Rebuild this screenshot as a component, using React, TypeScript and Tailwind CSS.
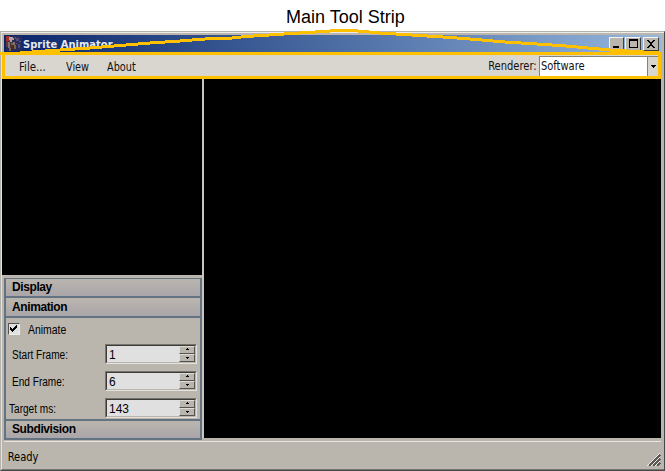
import React from 'react';

const bevel = 'border border-t-[#f4f3f0] border-l-[#f4f3f0] border-r-[#404040] border-b-[#404040] bg-[#bab6ae]';

function SpinButton({ up }: { up?: boolean }) {
  return (
    <div className="flex h-2 w-4 items-center justify-center border border-t-[#dedcd8] border-l-[#dedcd8] border-r-[#55534f] border-b-[#55534f] bg-[#bab6ae]">
      <svg width="5" height="3" shapeRendering="crispEdges">
        <path d={up ? 'M2 0h1v1h1v1H1V1h1z' : 'M1 1h3v1H3v1H2V2H1z'} fill="#000" />
      </svg>
    </div>
  );
}

function Field({ label, value, indent }: { label: string; value: string; indent: string }) {
  return (
    <div className="flex h-[27px] items-center">
      <div className={`w-[99px] shrink-0 ${indent}`}>
        <span className="block origin-left scale-x-[0.84] whitespace-nowrap pt-0.5 text-[12px]">{label}</span>
      </div>
      <div className="flex h-5 w-[92px] border border-t-[#77746e] border-l-[#77746e] border-r-[#e4e2de] border-b-[#e4e2de]">
        <div className="flex w-full justify-between border border-t-[#3c3b38] border-l-[#3c3b38] border-r-[#bab6ae] border-b-[#bab6ae] bg-[#e0e0e0]">
          <span className="pl-0.5 text-[12px] leading-[18px]">{value}</span>
          <div className="flex flex-col">
            <SpinButton up />
            <SpinButton />
          </div>
        </div>
      </div>
    </div>
  );
}

function Header({ children, size = 'h-[17px] leading-[17px]' }: { children: string; size?: string }) {
  return (
    <div className={`${size} bg-linear-to-b from-[#bab6ae] to-[#aaa5a9] pl-1.5 text-[12px] font-bold tracking-[-0.4px]`}>
      {children}
    </div>
  );
}

function AppIcon() {
  return (
    <svg width="16" height="15" shapeRendering="crispEdges" className="shrink-0">
      <path d="M0 0h16v15H0z" fill="#292b58" />
      <path d="M0 0h4v5H0z" fill="#a52e2b" />
      <path d="M0 5h3v6H0z" fill="#693538" />
      <path d="M3 1h4v3H3zM4 4h2v2H4z" fill="#a9a5a4" />
      <path d="M5 2h3v2H5z" fill="#b09a90" />
      <path d="M2 6h2v6H2zM7 6h2v3H7z" fill="#77757a" />
      <path d="M4 6h3v7H4z" fill="#4a3029" />
      <path d="M5 7h2v2H5zM8 9h2v4H8zM3 12h2v3H3z" fill="#806049" />
      <path d="M10 2h3v3h-3zM12 8h2v4h-2z" fill="#514b7d" />
      <path d="M9 1h1v2H9zM13 5h2v1h-2zM10 7h1v1h-1z" fill="#7a526b" />
    </svg>
  );
}

export default function App() {
  return (
    <div className="relative h-[471px] w-[665px] overflow-hidden bg-white font-['Liberation_Sans',sans-serif] text-[11px] text-black">
      <h1 className="h-[31px] pl-[286px] pt-[7px] text-[18px] leading-5">Main Tool Strip</h1>
      <div className="h-[440px] border border-t-[#b5b2ab] border-l-[#b5b2ab] border-r-[#45484c] border-b-[#45484c] bg-[#bab6ae]">
        <div className="h-full border-t border-l border-b border-t-[#eeece8] border-l-[#e5e3dd] border-b-[#77756f]">
          <div className="mr-[3px] flex h-full flex-col pt-0.5">
            <header className="ml-0.5 flex h-[17px] shrink-0 items-start justify-between bg-linear-to-r from-[#0b246a] to-[#96b7dc]">
              <div className="flex gap-px pl-0.5 pt-px">
                <AppIcon />
                <span className="font-['DejaVu_Sans_Condensed','DejaVu_Sans',sans-serif] text-[11px] leading-[17px] font-bold tracking-[0.05px] text-[#e6e9ef]">Sprite Animator</span>
              </div>
              <div className="mr-0.5 mt-0.5 flex h-[14px] w-[50px]">
                <div className={`h-[14px] w-[15px] ${bevel}`}>
                  <svg width="13" height="12"><path d="M3 8h6v2H3z" /></svg>
                </div>
                <div className={`ml-px h-[14px] w-4 ${bevel}`}>
                  <svg width="14" height="12" shapeRendering="crispEdges"><path d="M3 1h9v9H3zM4 3v6h7V3z" fillRule="evenodd" /></svg>
                </div>
                <div className={`ml-0.5 h-[14px] w-4 ${bevel}`}>
                  <svg width="14" height="12" shapeRendering="crispEdges"><path d="M3 2h2v1h1v1h2V3h1V2h2v1h-1v1H9v1H8v2h1v1h1v1h1v1H9V9H8V8H6v1H5v1H3V9h1V8h1V7h1V5H5V4H4V3H3z" /></svg>
                </div>
              </div>
            </header>
            <nav className="flex h-[27px] shrink-0 justify-between border-[3px] border-[#ffc000] bg-[#d9d6cf] font-['DejaVu_Sans_Condensed','DejaVu_Sans',sans-serif] text-[12px] text-[#111]">
              <div className="flex pl-[14px] leading-[24px]">
                <span className="w-[47px] origin-left scale-x-[0.95]">File...</span>
                <span className="w-[41px] origin-left scale-x-[0.9]">View</span>
                <span className="origin-left scale-x-[0.9]">About</span>
              </div>
              <div className="flex">
                <span className="mr-0.5 origin-right scale-x-[0.92] leading-[22px]">Renderer:</span>
                <div className="mt-px flex w-[119px] border-t border-l border-[#85827b] bg-white">
                  <span className="flex-1 origin-left scale-x-[0.92] pl-px leading-[19px]">Software</span>
                  <div className="flex w-[11px] items-center justify-center border-l border-[#85827b] bg-[#d9d6cf]">
                    <svg width="5" height="3" shapeRendering="crispEdges"><path d="M0 0h5v1H4v1H3v1H2V2H1V1H0z" /></svg>
                  </div>
                </div>
              </div>
            </nav>
            <main className="flex h-[361px] shrink-0">
              <aside className="w-[200px] shrink-0">
                <div className="h-[196px] bg-black" />
                <div className="ml-0.5 mt-[3px] h-[162px] w-[198px] border-2 border-t border-[#647382]">
                  <Header>Display</Header>
                  <div className="border-t-2 border-[#647382]"><Header size="h-[18px] leading-[19px]">Animation</Header></div>
                  <section className="h-[103px] border-t-2 border-[#647382]">
                    <label className="flex h-[22px] items-center gap-2 pl-[2px]">
                      <span className="flex h-3 w-3 items-center justify-center border border-t-[#55534f] border-l-[#55534f] border-r-[#eeece8] border-b-[#eeece8] bg-[#e0e0e0]">
                        <svg width="8" height="8" shapeRendering="crispEdges"><path d="M0 2h1v1h1v1h1V3h1V2h1V1h1V0h1v3H6v1H5v1H4v1H3v1H2V6H1V5H0z" /></svg>
                      </span>
                      <span className="origin-left scale-x-[0.87] pt-0.5 text-[12px]">Animate</span>
                    </label>
                    <Field label="Start Frame:" value="1" indent="pl-[6px]" />
                    <Field label="End Frame:" value="6" indent="pl-[6px]" />
                    <Field label="Target ms:" value="143" indent="pl-[3px]" />
                  </section>
                  <div className="border-t-2 border-[#647382]"><Header>Subdivision</Header></div>
                </div>
              </aside>
              <div className="h-[359px] w-0.5 bg-[#c9c6bf]" />
              <div className="h-[359px] flex-1 bg-black" />
            </main>
            <footer className="ml-0.5 mt-px flex flex-1 items-start justify-between border-t border-[#e6e4df]">
              <span className="origin-left scale-x-[0.92] pl-1 pt-[7px] font-['DejaVu_Sans_Condensed','DejaVu_Sans',sans-serif] text-[12px] leading-4">Ready</span>
              <svg width="14" height="14" className="mt-[11px]" shapeRendering="crispEdges">
                <path d="M0 13 13 0M4 13 13 4M8 13 13 8" stroke="#eeece8" />
                <path d="M2 13 13 2M6 13 13 6M10 13 13 10" stroke="#5c5954" strokeWidth="2" />
              </svg>
            </footer>
          </div>
        </div>
      </div>
      <svg width="665" height="60" className="absolute left-0 top-0" shapeRendering="crispEdges">
        <path d="M0 53.5 20 53 45 51 90 48 120 45.5 150 43 180 41 205 39 232 38 246 36.5 300 33 330 31 345 30.5 358 31 380 33 443 37 470 39 505 42 560 45.5 610 50 660 53" fill="none" stroke="#ffc000" strokeWidth="3" />
      </svg>
    </div>
  );
}
